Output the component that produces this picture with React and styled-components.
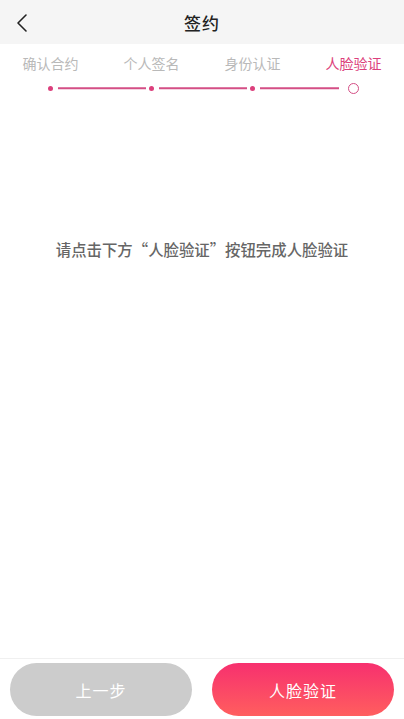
import React from 'react';
import styled, { createGlobalStyle } from 'styled-components';

const GlobalStyle = createGlobalStyle`
  html, body, #root {
    margin: 0;
    padding: 0;
    height: 100%;
  }
  body {
    font-family: "Noto Sans CJK SC", "Noto Sans", sans-serif;
    background: #fff;
  }
`;

const steps = ['确认合约', '个人签名', '身份认证', '人脸验证'];
const current = 3;

const Page = styled.div`
  height: 719px;
  display: flex;
  flex-direction: column;
  background: #fff;
`;

const Header = styled.header`
  height: 44px;
  flex-shrink: 0;
  background: #f5f5f5;
  display: flex;
  align-items: center;
  justify-content: center;
  position: relative;
`;

const Back = styled.button`
  position: absolute;
  left: 10px;
  top: 11px;
  width: 24px;
  height: 24px;
  padding: 0;
  border: none;
  background: transparent;
  display: flex;
  align-items: center;
  justify-content: center;
`;

const Title = styled.h1`
  margin: 0;
  font-size: 17px;
  font-weight: 500;
  color: #222;
  letter-spacing: 1px;
`;

const Steps = styled.div`
  display: grid;
  grid-template-columns: repeat(4, 1fr);
  padding-top: 8px;
`;

const Step = styled.div`
  display: flex;
  flex-direction: column;
  align-items: center;
`;

const Label = styled.span`
  font-size: 14px;
  line-height: 22px;
  color: ${p => (p.$active ? '#dc3f7c' : '#b9b9b9')};
`;

const Track = styled.div`
  height: 22px;
  margin-top: 3px;
  width: 100%;
  display: flex;
  align-items: center;
  justify-content: center;
  position: relative;
`;

const Line = styled.div`
  position: absolute;
  left: calc(50% + 7px);
  width: ${p => (p.$short ? '79px' : '88px')};
  height: 1.5px;
  background: #d44e85;
  top: 50%;
  transform: translateY(-50%);
`;

const Dot = styled.div`
  width: ${p => (p.$open ? '9px' : '5px')};
  height: ${p => (p.$open ? '9px' : '5px')};
  border-radius: 50%;
  box-sizing: content-box;
  background: ${p => (p.$open ? '#fff' : '#dc3f7c')};
  border: ${p => (p.$open ? '1.3px solid #d44e85' : 'none')};
`;

const Body = styled.main`
  flex: 1;
  display: flex;
  flex-direction: column;
  align-items: center;
`;

const Hint = styled.p`
  margin: 138px 0 0;
  font-size: 15.4px;
  font-weight: 500;
  color: #666;
  line-height: 24px;
`;

const Footer = styled.footer`
  flex-shrink: 0;
  border-top: 1px solid #f0f0f0;
  padding: 4px 10px 3px;
  display: grid;
  grid-template-columns: 1fr 1fr;
  gap: 20px;
`;

const Button = styled.button`
  height: 53px;
  border: none;
  border-radius: 27px;
  font-family: inherit;
  font-size: 16px;
  color: #fff;
  letter-spacing: 1px;
  background: ${p =>
    p.$primary ? 'linear-gradient(180deg, #f7306f 0%, #ff5e5e 100%)' : '#cccccc'};
`;

export default function App() {
  return (
    <Page>
      <GlobalStyle />
      <Header>
        <Back aria-label="返回">
          <svg width="14" height="20" viewBox="0 0 14 20">
            <path d="M11 2 L3 10 L11 18" fill="none" stroke="#222" strokeWidth="1.6" strokeLinecap="round" strokeLinejoin="round" />
          </svg>
        </Back>
        <Title>签约</Title>
      </Header>
      <Steps>
        {steps.map((s, i) => (
          <Step key={s}>
            <Label $active={i === current}>{s}</Label>
            <Track>
              {i < steps.length - 1 && <Line $short={i === current - 1} />}
              <Dot $open={i === current} />
            </Track>
          </Step>
        ))}
      </Steps>
      <Body>
        <Hint>请点击下方“人脸验证”按钮完成人脸验证</Hint>
      </Body>
      <Footer>
        <Button>上一步</Button>
        <Button $primary>人脸验证</Button>
      </Footer>
    </Page>
  );
}
